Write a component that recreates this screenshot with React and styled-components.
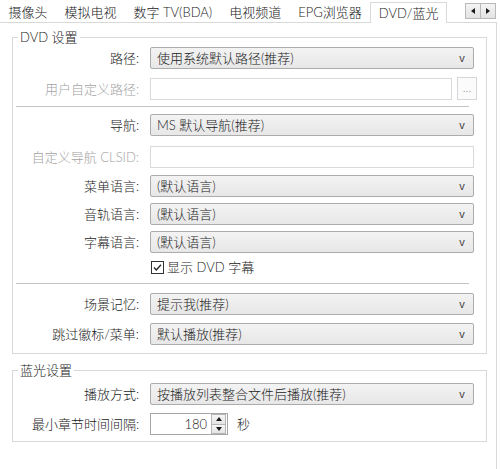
import React from "react";
import styled, { createGlobalStyle } from "styled-components";

const GlobalStyle = createGlobalStyle`
  html, body { margin: 0; padding: 0; background: #ffffff; }
  body {
    font-family: "Lato", "Noto Sans CJK SC", "Noto Sans", sans-serif;
    font-size: 13px;
    font-weight: 300;
    color: #1a1a1a;
  }
  * { box-sizing: border-box; }
`;

const Window = styled.div`
  width: 500px;
  height: 469px;
  overflow: hidden;
  display: flex;
  flex-direction: column;
  background: #ffffff;
`;

const TabBar = styled.div`
  height: 22px;
  flex: none;
  display: flex;
  align-items: flex-end;
  background: #ffffff;
`;

const Tab = styled.div`
  height: ${(p) => (p.$active ? "21px" : "20px")};
  line-height: ${(p) => (p.$active ? "20px" : "19px")};
  padding: 0 7.5px;
  white-space: nowrap;
  color: #1a1a1a;
  position: relative;
  z-index: ${(p) => (p.$active ? 1 : 0)};
  margin-bottom: ${(p) => (p.$active ? "-1px" : "0")};
  background: #ffffff;
  border: 1px solid ${(p) => (p.$active ? "#d9d9d9" : "transparent")};
  border-bottom: none;
`;

const Scroller = styled.div`
  margin-left: auto;
  margin-right: 4px;
  align-self: flex-start;
  margin-top: 3px;
  display: flex;
`;

const ScrollButton = styled.div`
  width: 16px;
  height: 16px;
  border: 1px solid #b9b9b9;
  margin-left: -1px;
  background: linear-gradient(#f4f4f4, #e3e3e3);
  display: flex;
  align-items: center;
  justify-content: center;
`;

const Pane = styled.div`
  flex: 1;
  border-top: 1px solid #d9d9d9;
  border-right: 1px solid #d9d9d9;
  margin-right: 3px;
  padding-top: 6px;
`;

const Group = styled.fieldset`
  margin: ${(p) => (p.$first ? "0" : "8px")} 9px 0 12px;
  padding: 0 12px ${(p) => p.$pb}px 0;
  border: 1px solid #d8d8d8;
  box-shadow: inset 1px 1px 0 #ffffff;
  min-width: 0;
`;

const Legend = styled.legend`
  margin-left: 5px;
  padding: 0 2px;
  line-height: 17px;
  height: 17px;
  color: #1a1a1a;
`;

const Row = styled.div`
  display: grid;
  grid-template-columns: 126px 1fr;
  column-gap: 11px;
  align-items: center;
  margin-top: ${(p) => p.$mt}px;
`;

const Label = styled.div`
  text-align: right;
  white-space: nowrap;
  line-height: 22px;
  color: ${(p) => (p.$disabled ? "#a3a3a3" : "#1a1a1a")};
`;

const SelectBox = styled.div`
  height: 22px;
  border: 1px solid #acacac;
  border-radius: 2px;
  background: linear-gradient(#f3f3f3, #e7e7e7);
  display: flex;
  align-items: center;
  padding: 0 0 0 6px;
  color: #222222;
  white-space: nowrap;
`;

const SelectText = styled.span`
  flex: 1;
  line-height: 20px;
`;

const Arrow = styled.span`
  width: 22px;
  text-align: center;
  font-family: "Liberation Sans", Arial, sans-serif;
  font-size: 11px;
  color: #444444;
`;

const Controls = styled.div`
  display: flex;
  align-items: center;
  gap: ${(p) => p.$gap || 0}px;
  margin-right: ${(p) => p.$mr || 0}px;
`;

const TextInput = styled.div`
  flex: ${(p) => (p.$w ? "none" : 1)};
  width: ${(p) => (p.$w ? `${p.$w}px` : "auto")};
  height: 22px;
  border: 1px solid ${(p) => (p.$dark ? "#a6a6a6" : "#d9d9d9")};
  background: #ffffff;
  display: flex;
  align-items: center;
  justify-content: flex-end;
`;

const DotsButton = styled.div`
  width: 20px;
  height: 23px;
  border: 1px solid #d6d6d6;
  background: #fbfbfb;
  color: #9a9a9a;
  font-family: "Liberation Sans", Arial, sans-serif;
  font-size: 10px;
  display: flex;
  align-items: flex-end;
  justify-content: center;
  padding-bottom: 6px;
  line-height: 8px;
`;

const Separator = styled.div`
  height: 2px;
  margin: ${(p) => p.$mt}px 5px 0 3px;
  border-top: 1px solid #c4c4c4;
  border-bottom: 1px solid #ffffff;
`;

const CheckRow = styled.label`
  display: flex;
  align-items: center;
  gap: 3px;
  height: 18px;
  margin-left: 1px;
  line-height: 18px;
  color: #1a1a1a;
  white-space: nowrap;
`;

const SpinValue = styled.span`
  color: #222222;
  padding-right: 4px;
  line-height: 20px;
`;

const SpinButtons = styled.div`
  width: 15px;
  height: 20px;
  display: flex;
  flex-direction: column;
  margin-right: 1px;
`;

const SpinButton = styled.div`
  flex: 1;
  border: 1px solid #b5b5b5;
  background: linear-gradient(#f6f6f6, #e4e4e4);
  display: flex;
  align-items: center;
  justify-content: center;
  margin-top: ${(p) => (p.$down ? "-1px" : "0")};
`;

const Unit = styled.span`
  line-height: 22px;
`;

function Select({ children }) {
  return (
    <SelectBox>
      <SelectText>{children}</SelectText>
      <Arrow>v</Arrow>
    </SelectBox>
  );
}

function Tri({ dir }) {
  const pts = {
    left: "4,0 4,6 0,3",
    right: "0,0 0,6 4,3",
    up: "0,4 6,4 3,0",
    down: "0,0 6,0 3,4",
  }[dir];
  const horiz = dir === "left" || dir === "right";
  return (
    <svg width={horiz ? 4 : 6} height={horiz ? 6 : 4} viewBox={horiz ? "0 0 4 6" : "0 0 6 4"}>
      <polygon points={pts} fill="#1a1a1a" />
    </svg>
  );
}

function CheckIcon() {
  return (
    <svg width="13" height="13" viewBox="0 0 13 13">
      <rect x="0.5" y="0.5" width="12" height="12" fill="#ffffff" stroke="#333333" />
      <path d="M3 6.5 L5.3 9 L10 3.8" fill="none" stroke="#222222" strokeWidth="1.3" />
    </svg>
  );
}

const tabs = ["摄像头", "模拟电视", "数字 TV(BDA)", "电视频道", "EPG浏览器", "DVD/蓝光"];

export default function App() {
  return (
    <>
      <GlobalStyle />
      <Window>
        <TabBar>
          {tabs.map((t, i) => (
            <Tab key={t} $active={i === tabs.length - 1}>
              {t}
            </Tab>
          ))}
          <Scroller>
            <ScrollButton>
              <Tri dir="left" />
            </ScrollButton>
            <ScrollButton>
              <Tri dir="right" />
            </ScrollButton>
          </Scroller>
        </TabBar>
        <Pane>
          <Group $first $pb={8}>
            <Legend>DVD 设置</Legend>
            <Row $mt={1}>
              <Label>路径:</Label>
              <Select>使用系统默认路径(推荐)</Select>
            </Row>
            <Row $mt={8}>
              <Label $disabled>用户自定义路径:</Label>
              <Controls $gap={5} $mr={-3}>
                <TextInput />
                <DotsButton>...</DotsButton>
              </Controls>
            </Row>
            <Separator $mt={6} />
            <Row $mt={6}>
              <Label>导航:</Label>
              <Select>MS 默认导航(推荐)</Select>
            </Row>
            <Row $mt={10}>
              <Label $disabled>自定义导航 CLSID:</Label>
              <TextInput />
            </Row>
            <Row $mt={7}>
              <Label>菜单语言:</Label>
              <Select>(默认语言)</Select>
            </Row>
            <Row $mt={6}>
              <Label>音轨语言:</Label>
              <Select>(默认语言)</Select>
            </Row>
            <Row $mt={6}>
              <Label>字幕语言:</Label>
              <Select>(默认语言)</Select>
            </Row>
            <Row $mt={5}>
              <span />
              <CheckRow>
                <CheckIcon />
                显示 DVD 字幕
              </CheckRow>
            </Row>
            <Separator $mt={7} />
            <Row $mt={8}>
              <Label>场景记忆:</Label>
              <Select>提示我(推荐)</Select>
            </Row>
            <Row $mt={8}>
              <Label>跳过徽标/菜单:</Label>
              <Select>默认播放(推荐)</Select>
            </Row>
          </Group>
          <Group $pb={6}>
            <Legend>蓝光设置</Legend>
            <Row $mt={4}>
              <Label>播放方式:</Label>
              <Select>按播放列表整合文件后播放(推荐)</Select>
            </Row>
            <Row $mt={8}>
              <Label>最小章节时间间隔:</Label>
              <Controls $gap={9}>
                <TextInput $w={78} $dark>
                  <SpinValue>180</SpinValue>
                  <SpinButtons>
                    <SpinButton>
                      <Tri dir="up" />
                    </SpinButton>
                    <SpinButton $down>
                      <Tri dir="down" />
                    </SpinButton>
                  </SpinButtons>
                </TextInput>
                <Unit>秒</Unit>
              </Controls>
            </Row>
          </Group>
        </Pane>
      </Window>
    </>
  );
}
